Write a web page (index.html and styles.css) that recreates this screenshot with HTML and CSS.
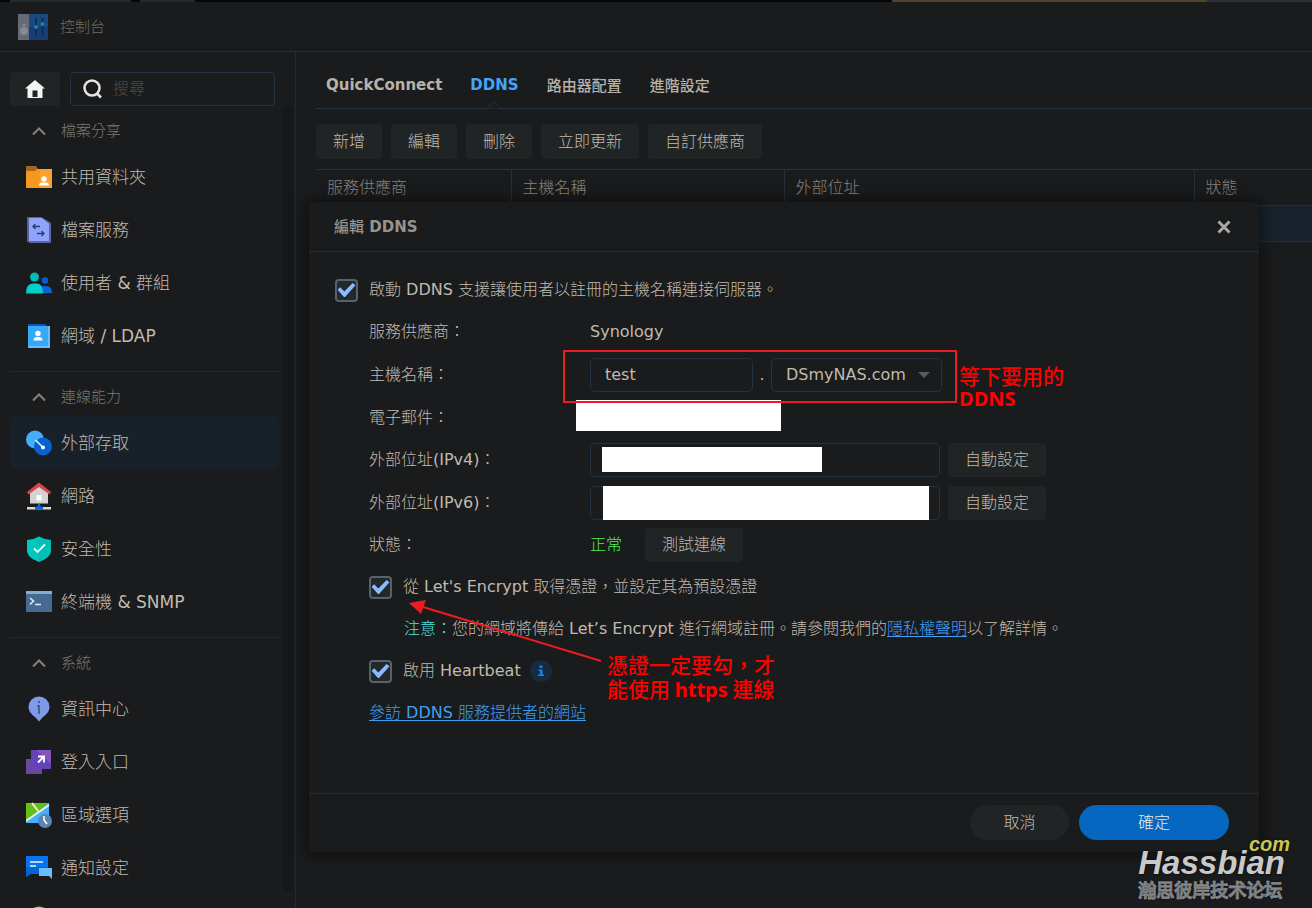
FILE: index.html
```html
<!DOCTYPE html>
<html lang="zh-Hant">
<head>
<meta charset="utf-8">
<title>控制台</title>
<link rel="stylesheet" href="styles.css">
</head>
<body>
<div class="app">
  <div class="desktop-strip"></div>
  <header class="titlebar">
    <svg class="titlebar-icon" viewBox="0 0 30 28" aria-hidden="true">
      <path fill="#646a76" d="M0 1h12v26H0z"/><path fill="#164a80" d="M11 1h19v26H11z"/><path fill="#173d78" d="M11 14h19v13H11z"/>
      <circle cx="6" cy="18" r="4" fill="#858991"/><circle cx="6" cy="12" r="1.500" fill="#858991"/>
      <path stroke="#102844" stroke-width="1.500" d="M18 5v18M24.500 5v18"/><circle cx="18" cy="14" r="2" fill="#2382a6"/><circle cx="24.500" cy="11" r="2" fill="#2382a6"/>
    </svg>
    <span>控制台</span>
  </header>
  <div class="workspace">
    <aside class="sidebar">
      <div class="searchbar">
        <button class="home" type="button" aria-label="首頁"><svg width="20" height="18" viewBox="0 0 20 18"><path fill="#f4f4f4" d="M10 0l10 8.500h-2.500V18h-15V8.500H0zM7.500 10.500V17h5v-6.500z" fill-rule="evenodd"/></svg></button>
        <label class="search">
          <svg width="20" height="20" viewBox="0 0 20 20" fill="none" stroke="#e6e6e6" stroke-width="2.500"><circle cx="9" cy="9" r="7.500"/><path d="M13.500 14l4.500 4.500"/></svg>
          <input type="search" placeholder="搜尋">
        </label>
      </div>
      <nav class="menu">
        <section>
          <button class="group" type="button"><svg width="14" height="9" viewBox="0 0 14 9"><path d="M1 7.500l6-6 6 6"/></svg>檔案分享</button>
          <a class="item" href="#"><svg width="26" height="26" viewBox="0 0 26 26"><path fill="#a86424" d="M0 2h10l2 3h14v6H0z"/><path fill="#f7981e" d="M0 7h9l2-2h15v19H0z"/><path fill="#fcb040" d="M14 5h12v19H14z" opacity=".45"/><circle cx="18" cy="15" r="2.700" fill="#fff"/><path fill="#fff" d="M13 21.500q0-3 3-3h4q3 0 3 3z"/></svg>共用資料夾</a>
          <a class="item" href="#"><svg width="26" height="26" viewBox="0 0 26 26"><path fill="#536199" d="M1 0h15v25H1z"/><path fill="#5a69a6" d="M3 1h14l8 5v20H3z"/><path fill="#8fa4fa" d="M3 1h13l7 6v17H3z"/><path stroke="#233d73" stroke-width="1.300" fill="none" d="M14 9.500H7m2.500-2.500L7 9.500 9.500 12M11 16.500h7M15.500 14l2.500 2.500-2.500 2.500"/></svg>檔案服務</a>
          <a class="item" href="#"><svg width="26" height="26" viewBox="0 0 26 26"><circle cx="8.500" cy="7" r="4.500" fill="#00bdb4"/><circle cx="19" cy="10.500" r="3.200" fill="#0b5ed1"/><path fill="#0b63dc" d="M15 17q1-1 3-1h2q6 0 6 7H15z"/><path fill="#00cfca" d="M0 23.500q0-10 7-10h4q6 0 6 10z"/></svg>使用者 &amp; 群組</a>
          <a class="item" href="#"><svg width="26" height="26" viewBox="0 0 26 26"><path fill="#0858b7" d="M2 1h17l3 3v20H2z"/><path fill="#69bfff" d="M2 3h22v22H3q-1 0-1-1z"/><path fill="#36a8f8" d="M2 3h20v20H2z"/><circle cx="12" cy="10.500" r="2.700" fill="#fff"/><path fill="#fff" d="M7.500 17.500q0-3.500 3.500-3.500h2q3.500 0 3.500 3.500z"/></svg>網域 / LDAP</a>
        </section>
        <section>
          <button class="group" type="button"><svg width="14" height="9" viewBox="0 0 14 9"><path d="M1 7.500l6-6 6 6"/></svg>連線能力</button>
          <a class="item active" href="#" aria-current="page"><svg width="26" height="26" viewBox="0 0 26 26"><circle cx="9" cy="9.500" r="9" fill="#46aef9"/><circle cx="17" cy="16.500" r="9" fill="#0762cf"/><path stroke="#d9efff" stroke-width="1.700" d="M9.500 10l7 7"/><circle cx="17" cy="17.500" r="2" fill="#fff"/></svg>外部存取</a>
          <a class="item" href="#"><svg width="26" height="28" viewBox="0 0 26 28"><path fill="#d3d3d3" d="M4 9l9-7 9 7v12.500H4z"/><path fill="#d94848" d="M13 .5L25 10l-1.500 2.500L13 5 2.500 12.500 1 10z"/><path fill="#fff" d="M10.500 13h5v5.500h-5z"/><path fill="#d8d8ce" d="M1 25h24v2.500H1z"/><path fill="#0868d5" d="M12 22h2v2l3 1v2.500H9V25l3-1z"/></svg>網路</a>
          <a class="item" href="#"><svg width="26" height="26" viewBox="0 0 26 26"><path fill="#00c8be" d="M13 .5Q19 4 25 4v10c0 6-5 9-12 12C6 23 1 20 1 14V4Q7 4 13 .5z"/><path fill="#00b5ad" opacity=".5" d="M13 .5Q19 4 25 4v10c0 6-5 9-12 12z"/><path fill="none" stroke="#eefcff" stroke-width="1.800" d="M8 12.500l3.500 3.500L19 8.500"/></svg>安全性</a>
          <a class="item" href="#"><svg width="26" height="26" viewBox="0 0 26 26"><path fill="#456b92" d="M0 2h26v21H0z"/><path fill="#87adcd" d="M0 2h26v3H0z"/><path fill="none" stroke="#e2ebf2" stroke-width="1.600" d="M4 9l3.500 3L4 15.500M9 15.500h6"/></svg>終端機 &amp; SNMP</a>
        </section>
        <section>
          <button class="group" type="button"><svg width="14" height="9" viewBox="0 0 14 9"><path d="M1 7.500l6-6 6 6"/></svg>系統</button>
          <a class="item" href="#"><svg width="26" height="26" viewBox="0 0 26 26"><path fill="#8199e9" d="M13 .5a10.500 10.500 0 0 1 10.500 10.500c0 5-4 8-7.500 11l-3 3.500-3-3.500C6.500 19 2.500 16 2.500 11A10.500 10.500 0 0 1 13 .5z"/><path stroke="#175d7a" stroke-width="1.500" fill="none" d="M12 6h2M11 10h2v8"/></svg>資訊中心</a>
          <a class="item" href="#"><svg width="26" height="26" viewBox="0 0 26 26"><path fill="#68499a" d="M0 10h16v15H0z"/><path fill="#6543b6" d="M5 1h20v19H5z"/><path fill="#8654bb" d="M10 1h15v14z"/><path fill="none" stroke="#fff" stroke-width="1.900" d="M12 13.500L17.500 8M12 7.500h6v6"/></svg>登入入口</a>
          <a class="item" href="#"><svg width="26" height="26" viewBox="0 0 26 26"><path fill="#46afff" d="M0 1h23v20H0z"/><path fill="#66bd18" d="M0 1h23L0 18z"/><path fill="none" stroke="#e6f4d5" stroke-width="2" d="M0 19L23 3M6 1l6 8"/><circle cx="19" cy="19" r="7" fill="#5a85b4"/><path fill="none" stroke="#fff" stroke-width="1.600" d="M18 14v4l3 4"/></svg>區域選項</a>
          <a class="item" href="#"><svg width="26" height="26" viewBox="0 0 26 26"><path fill="#0873ef" d="M0 1h22v18H5l-5 3z"/><path fill="#0058c7" d="M0 12h22v7H5l-5 3z" opacity=".6"/><path stroke="#eaf5ff" stroke-width="1.600" d="M4 7h13M4 11h6"/><path fill="#68bdfb" d="M13 13h13v11l-3-3H13z"/></svg>通知設定</a>
          <a class="item" href="#"><svg width="26" height="30" viewBox="0 0 26 30"><circle cx="13" cy="12" r="11.500" fill="#c5b34c"/></svg></a>
        </section>
      </nav>
      <div class="scroll-track"></div>
    </aside>
    <main class="content">
      <nav class="tabs">
        <a href="#">QuickConnect</a>
        <a class="selected" href="#">DDNS<svg width="16" height="9" viewBox="0 0 16 9"><path d="M0 8.500h1l7-7 7 7h1" fill="#1a1b1c" stroke="#263442"/></svg></a>
        <a class="han" href="#">路由器配置</a>
        <a class="han" href="#">進階設定</a>
      </nav>
      <div class="toolbar">
        <button class="btn" type="button">新增</button>
        <button class="btn" type="button">編輯</button>
        <button class="btn" type="button">刪除</button>
        <button class="btn" type="button">立即更新</button>
        <button class="btn" type="button">自訂供應商</button>
      </div>
      <table class="records">
        <colgroup><col class="col-provider"><col class="col-host"><col class="col-address"><col></colgroup>
        <thead><tr><th>服務供應商</th><th>主機名稱</th><th>外部位址</th><th>狀態</th></tr></thead>
        <tbody><tr><td></td><td></td><td></td><td></td></tr></tbody>
      </table>
    </main>
  </div>

  <div class="dialog" role="dialog" aria-labelledby="dialog-title">
    <div class="dialog-head">
      <h2 id="dialog-title"><span class="han">編輯</span> DDNS</h2>
      <button class="close" type="button" aria-label="關閉"><svg width="14" height="14" viewBox="0 0 14 14"><path d="M1.500 1.500l11 11M12.500 1.500l-11 11" stroke="#a8a8a8" stroke-width="3"/></svg></button>
    </div>
    <form class="form">
      <label class="row check"><input type="checkbox" checked>啟動 DDNS 支援讓使用者以註冊的主機名稱連接伺服器。</label>
      <div class="row inner"><span class="name">服務供應商：</span><span>Synology</span></div>
      <div class="row inner field">
        <label class="name" for="host">主機名稱：</label>
        <input class="text host" id="host" type="text" value="test">
        <span class="dot">.</span>
        <span class="select"><select aria-label="網域"><option>DSmyNAS.com</option></select><svg width="12" height="6" viewBox="0 0 12 6"><path fill="#535b65" d="M0 0h12L6 6z"/></svg></span>
      </div>
      <div class="row inner"><span class="name">電子郵件：</span><span class="mask mask-mail"></span></div>
      <div class="row inner">
        <label class="name" for="ipv4">外部位址(IPv4)：</label>
        <span class="masked"><input class="text" id="ipv4" type="text"><span class="mask mask-v4"></span></span>
        <button class="btn" type="button">自動設定</button>
      </div>
      <div class="row inner field">
        <label class="name" for="ipv6">外部位址(IPv6)：</label>
        <span class="masked"><input class="text" id="ipv6" type="text"><span class="mask mask-v6"></span></span>
        <button class="btn" type="button">自動設定</button>
      </div>
      <div class="row inner"><span class="name">狀態：</span><span class="ok">正常</span><button class="btn" type="button">測試連線</button></div>
      <label class="row inner check"><input type="checkbox" checked>從 Let's Encrypt 取得憑證，並設定其為預設憑證</label>
      <p class="row note"><span><span class="hint">注意：</span>您的網域將傳給 Let’s Encrypt 進行網域註冊。請參閱我們的<a href="#">隱私權聲明</a>以了解詳情。</span></p>
      <div class="row inner"><label class="check"><input type="checkbox" checked>啟用 Heartbeat</label><svg class="info" width="22" height="22" viewBox="0 0 22 22"><circle cx="11" cy="11" r="11" fill="#182a3d"/><path fill="#1683f5" d="M9.500 5.500h3V8h-3zM8.500 9.500h4v5h1.500V16H8v-1.500h2V11H8.500z"/></svg></div>
      <div class="row inner"><a href="#">參訪 DDNS 服務提供者的網站</a></div>
    </form>
    <div class="dialog-foot">
      <button class="btn pill" type="button">取消</button>
      <button class="btn pill primary" type="button">確定</button>
    </div>
    <div class="mark-box"></div>
    <p class="mark mark-host">等下要用的<br><b>DDNS</b></p>
    <svg class="mark-arrow" width="194" height="62" viewBox="0 0 194 62"><path d="M14 7l178 54" stroke="#ed1c24" stroke-width="2"/><path d="M0 3l17-3-5 14z" fill="#ed1c24"/></svg>
    <p class="mark mark-cert">憑證一定要勾，才<br>能使用 <b>https</b> 連線</p>
  </div>

  <div class="watermark"><span class="tld">com</span><span class="brand">Hassbian</span><span class="forum" lang="zh-Hans">瀚思彼岸技术论坛</span></div>
</div>
</body>
</html>
```

FILE: styles.css
```css
* { box-sizing: border-box; }
body {
  margin: 0;
  background: #1a1b1c;
  color: #c0baaf;
  font: 16px/24px "DejaVu Sans", "Noto Sans CJK TC Light", "Noto Sans CJK TC", sans-serif;
}
button, input, select { font: inherit; color: inherit; margin: 0; }
button { border: 0; background: none; padding: 0; cursor: pointer; }
a { color: #3f9ff5; text-underline-offset: 2px; }
p, h2 { margin: 0; }
svg { flex: none; }

.app { position: relative; height: 100vh; overflow: hidden; display: flex; flex-direction: column; }
.desktop-strip {
  flex: none;
  height: 2px;
  background: linear-gradient(90deg, #05060b 10px, #232b31 10px 131px, #05060b 131px 140px, #232b31 140px 195px, #05060b 195px 68%, #514228 68% 92%, #283136 92%);
}
.titlebar {
  flex: none;
  display: flex;
  align-items: center;
  gap: 12px;
  height: 50px;
  padding-left: 18px;
  border-bottom: 1px solid #2b2e31;
  color: #6e6b64;
  font-size: 15px;
}
.titlebar-icon { width: 30px; height: 28px; }
.workspace { flex: 1; min-height: 0; display: flex; }

.sidebar { position: relative; flex: none; width: 296px; padding: 20px 15px 0 10px; border-right: 1px solid #25282a; overflow: hidden; }
.searchbar { display: flex; gap: 10px; height: 34px; padding-right: 5px; }
.home { flex: none; width: 50px; border-radius: 4px; background: #212425; display: flex; align-items: center; justify-content: center; }
.search { flex: 1; min-width: 0; display: flex; align-items: center; gap: 10px; padding: 0 12px; border: 1px solid #243342; border-radius: 4px; }
.search input { flex: 1; min-width: 0; border: 0; outline: 0; padding: 0; background: none; }
.search input::placeholder { color: #4c4b49; opacity: 1; }
.menu section + section { margin-top: 9px; border-top: 1px solid #22292e; }
.group { display: flex; align-items: center; gap: 15px; width: 100%; height: 44px; padding: 6px 22px 0; color: #7c7972; font-size: 15px; }
.group svg { fill: none; stroke: #85827c; stroke-width: 2; }
.item { display: flex; align-items: center; gap: 9px; height: 53px; padding-left: 16px; border-radius: 6px; color: #c0baaf; font-size: 17px; text-decoration: none; }
.active { background: #18212a; }
.scroll-track { position: absolute; top: 54px; right: 2px; bottom: 16px; width: 10px; border-radius: 5px; background: #161718; }

.content { flex: 1; min-width: 0; padding-left: 20px; }
.tabs { display: flex; gap: 28px; height: 57px; padding: 21px 10px 0; border-bottom: 1px solid #263442; font-size: 15px; font-weight: 700; }
.tabs a { position: relative; color: #b8b2a8; text-decoration: none; }
.tabs .selected { color: #43a5fa; }
.tabs svg { position: absolute; left: calc(50% - 8px); bottom: -1px; }
.han { font-family: "Noto Sans CJK TC", sans-serif; font-weight: 500; }
.toolbar { display: flex; gap: 9px; padding: 15px 0 10px; }
.btn { height: 35px; padding: 0 17px; border-radius: 4px; background: #212425; white-space: nowrap; }
.records { width: 100%; table-layout: fixed; border-collapse: collapse; border-top: 1px solid #263442; }
.col-provider { width: 195px; }
.col-host { width: 273px; }
.col-address { width: 410px; }
.records th { height: 36px; padding: 0 11px; border-right: 1px solid #23303b; text-align: left; font-weight: 400; color: #87837a; }
.records th:last-child { border-right: 0; }
.records td { height: 36px; padding: 0; background: #18222c; border-top: 1px solid #23303b; border-bottom: 1px solid #23303b; }

.dialog { position: absolute; top: 202px; left: 309px; right: 53px; bottom: 56px; display: flex; flex-direction: column; border-radius: 4px; background: #1a1b1c; box-shadow: 0 0 14px 3px rgba(0, 0, 0, .45); }
.dialog-head { flex: none; display: flex; align-items: center; justify-content: space-between; height: 50px; padding: 0 28px 0 25px; border-bottom: 1px solid #252d33; }
.dialog-head h2 { font-size: 15px; line-height: 24px; font-weight: 700; color: #98948b; }
.close { display: flex; }
.form { flex: 1; display: flex; flex-direction: column; gap: 8px; padding: 21px 26px 0; }
.row { display: flex; align-items: center; min-height: 34px; }
.field { min-height: 35px; }
.inner { padding-left: 34px; }
.name { width: 221px; }
.check { display: flex; align-items: center; gap: 11px; }
.check input { appearance: none; width: 23px; height: 23px; border: 2px solid #56636e; border-radius: 4px; background: #232829; display: grid; place-items: center; }
.check input:checked::before { content: ""; width: 18px; height: 14px; background: #8abaff; clip-path: polygon(0 48%, 15% 30%, 38% 60%, 84% 0, 100% 16%, 42% 100%, 36% 100%); }
.form .btn { height: 34px; }
.text, .select { height: 34px; border: 1px solid #243342; border-radius: 5px; background: #1a1b1c; }
.text { width: 100%; padding: 0 14px; outline: 0; }
.host { width: 163px; }
.dot { width: 18px; text-align: center; }
.select { position: relative; width: 171px; }
.select select { appearance: none; width: 100%; height: 100%; padding: 0 14px; border: 0; background: none; outline: 0; }
.select svg { position: absolute; right: 11px; top: 13px; pointer-events: none; }
.masked { position: relative; width: 350px; height: 34px; margin-right: 8px; }
.mask { background: #fff; }
.mask-mail { width: 205px; height: 31px; margin: 0 0 4px -14px; }
.mask-v4 { position: absolute; left: 12px; top: 4px; width: 220px; height: 25px; }
.mask-v6 { position: absolute; left: 13px; top: 0; width: 326px; height: 34px; }
.ok { width: 55px; color: #50ef55; }
.note { padding-left: 69px; white-space: nowrap; }
.hint { color: #53e3df; }
.info { margin-left: 9px; }
.dialog-foot { flex: none; display: flex; justify-content: flex-end; gap: 10px; height: 59px; padding: 11px 30px 0; border-top: 1px solid #252d33; }
.pill { width: 99px; border-radius: 18px; }
.primary { width: 150px; background: #0567c0; color: #e8e8e4; }

.mark-box { position: absolute; left: 254px; top: 148px; width: 394px; height: 53px; border: 2px solid #ed1c24; }
.mark { position: absolute; color: #f00; font: 500 21px/24px "Noto Sans CJK TC", sans-serif; white-space: nowrap; }
.mark b { font-family: "Noto Sans", sans-serif; font-size: 20px; line-height: 20px; }
.mark-host { left: 650px; top: 162px; line-height: 22px; }
.mark-cert { left: 298px; top: 450px; }
.mark-arrow { position: absolute; left: 100px; top: 398px; }

.watermark { position: absolute; right: 22px; bottom: 6px; display: flex; flex-direction: column; font-family: "Liberation Sans", "Noto Sans CJK SC", sans-serif; font-weight: 700; text-shadow: 0 0 2px #000; }
.tld { align-self: flex-end; font-size: 20px; line-height: 13px; font-style: italic; color: #c8c850; z-index: 1; }
.brand { padding-right: 5px; font-size: 33px; line-height: 24px; font-style: italic; color: #c9c9c9; }
.forum { margin-top: 5px; font-size: 18px; line-height: 22px; font-weight: 500; color: #85878a; -webkit-text-stroke: 1px #d2d4d6; paint-order: stroke fill; }
```
